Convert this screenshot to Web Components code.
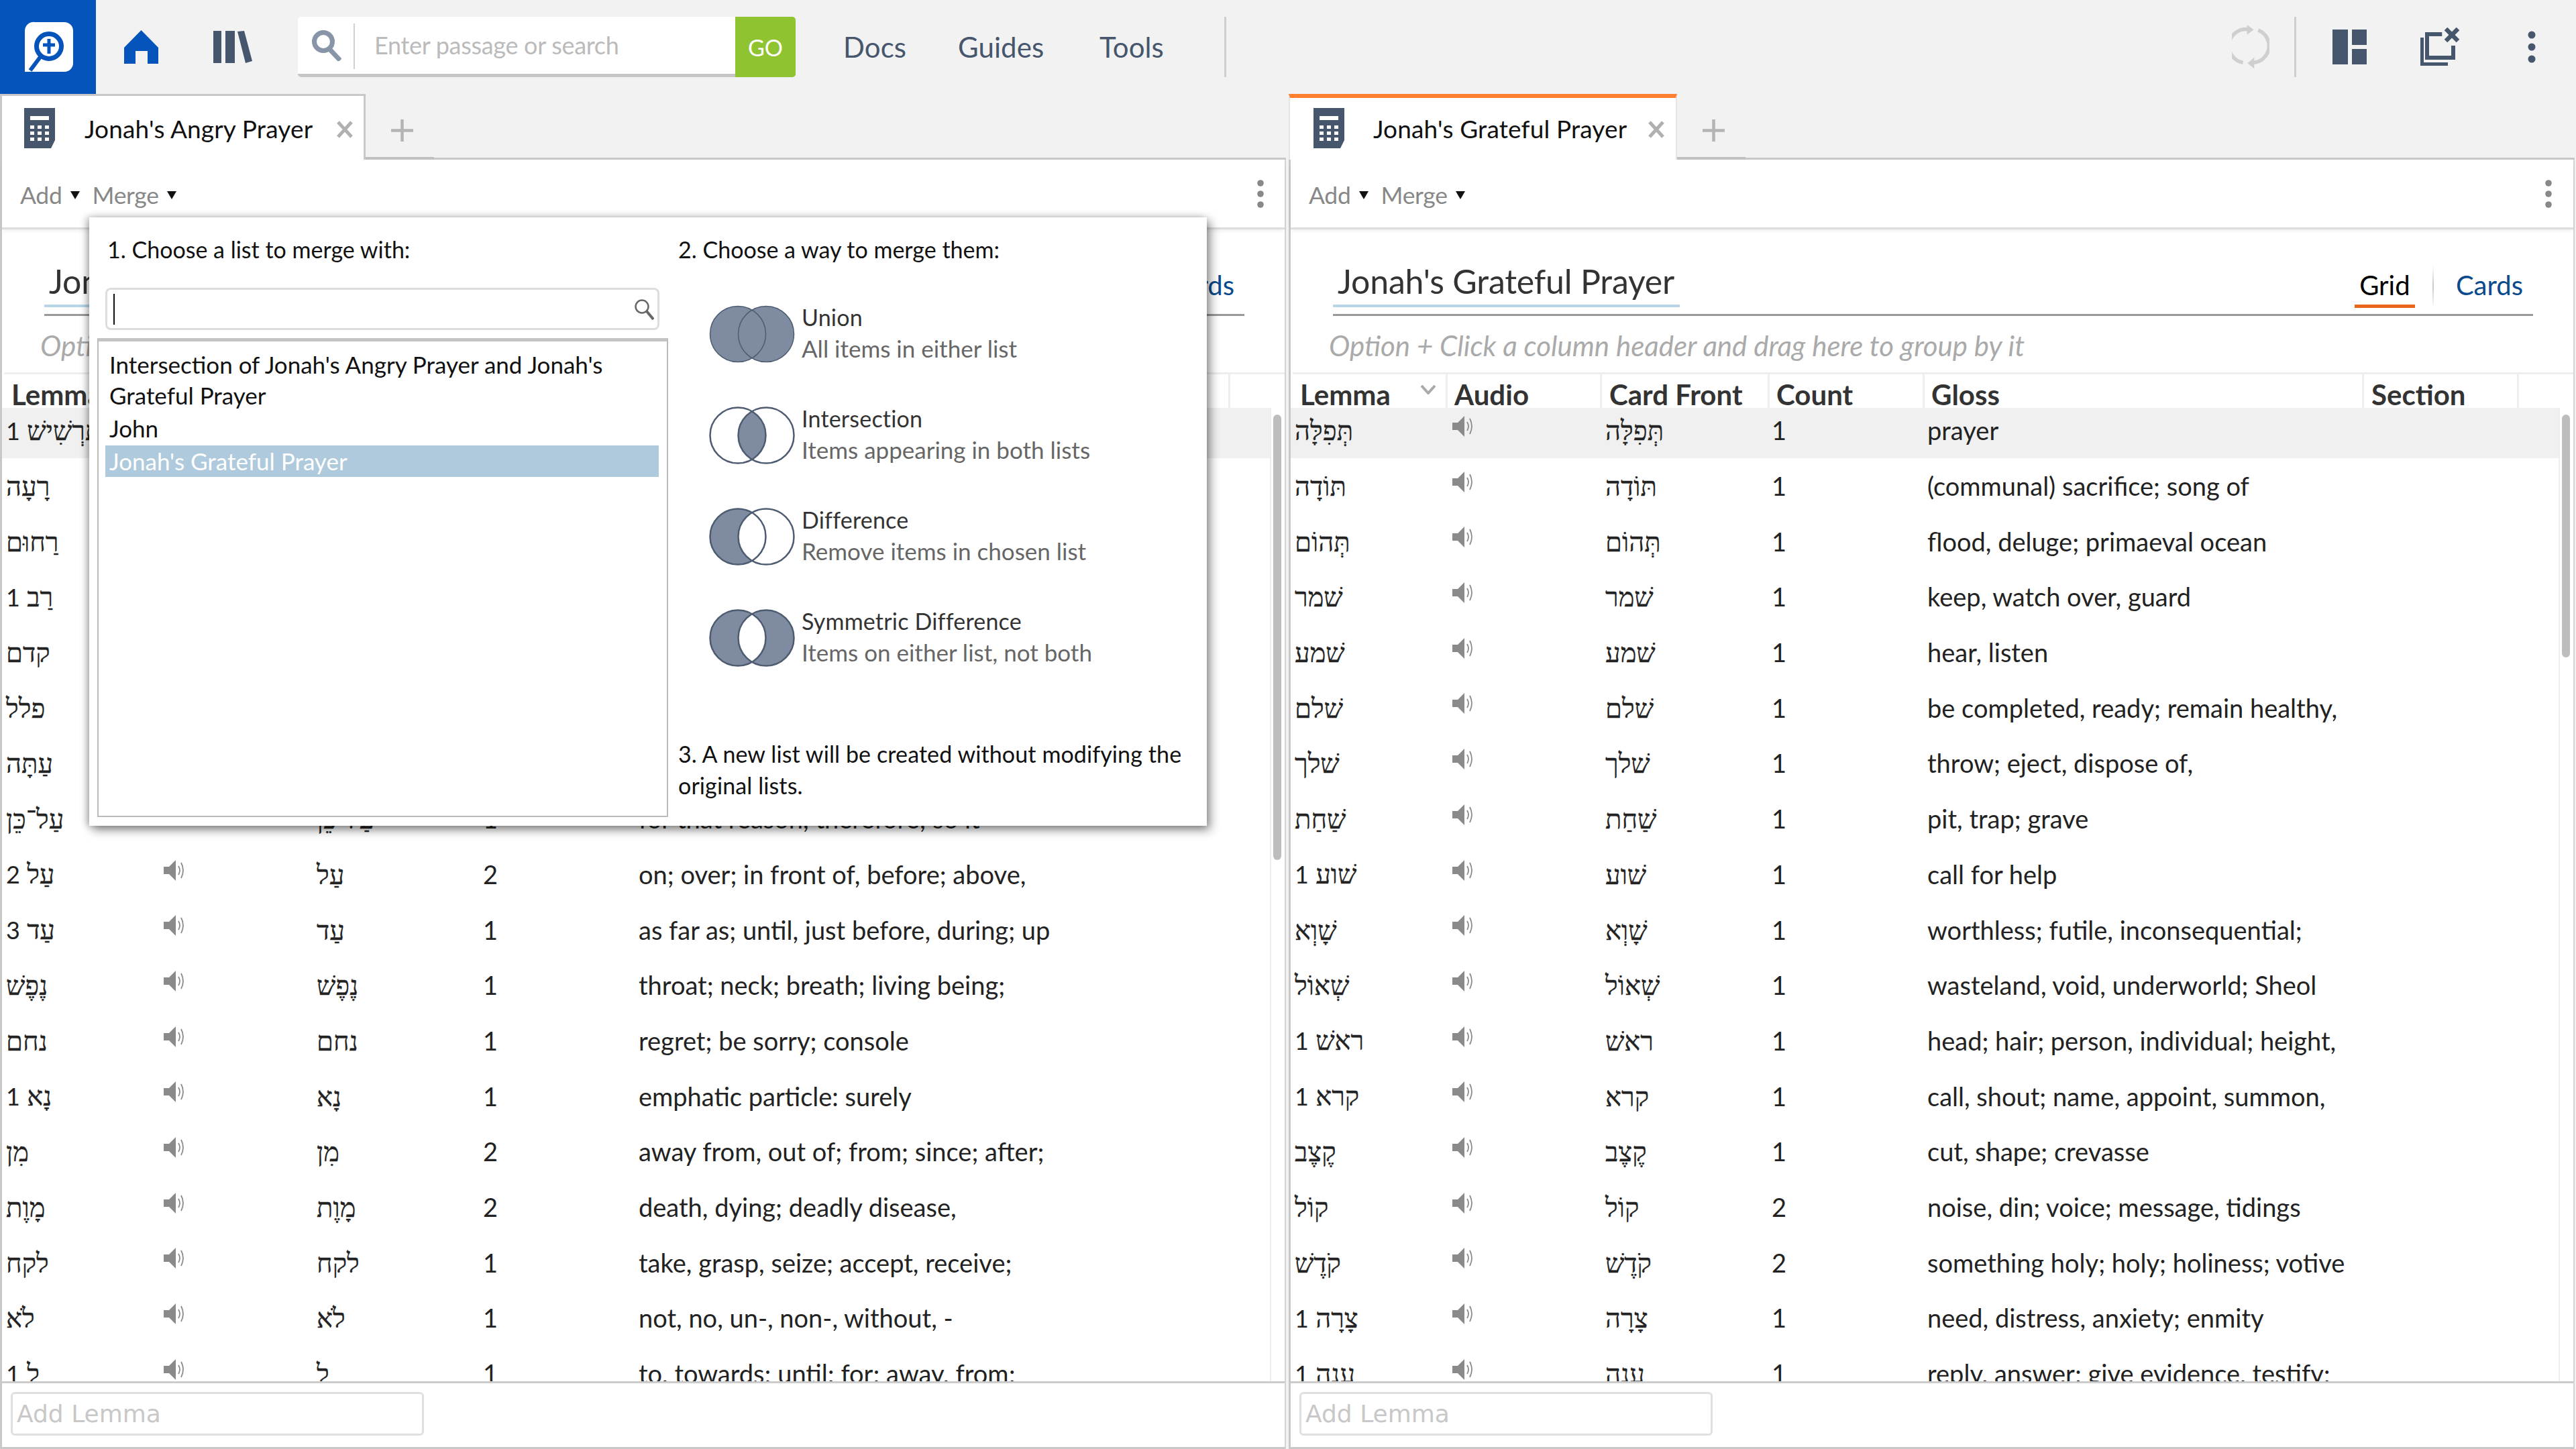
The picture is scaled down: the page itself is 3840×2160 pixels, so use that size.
<!DOCTYPE html>
<html lang="en"><head><meta charset="utf-8"><title>Jonah lists</title>
<style>
html,body{margin:0;height:100%;background:#f2f2f2;overflow:hidden}
body{display:flex;flex-direction:column;height:2160px;font-family:Lato,"Liberation Serif",serif;color:#222}
</style></head><body>
<top-bar></top-bar>
<pane-row>
  <list-pane name="Jonah's Angry Prayer" set="angry" thumb="664">
    <merge-popup></merge-popup>
  </list-pane>
  <list-pane name="Jonah's Grateful Prayer" set="grateful" thumb="362" accent></list-pane>
</pane-row>
<script>
const SANS='Lato,"Liberation Serif",serif';
class Base extends HTMLElement{
  render(html){const r=this.shadowRoot||this.attachShadow({mode:'open'});r.innerHTML=html;return r;}
}
class TopBar extends Base{connectedCallback(){this.render(`<style>
:host{display:flex;height:140px;flex:none;align-items:center;background:#f2f2f2;font-family:${SANS}}
.logo{width:143px;height:140px;background:#0454bc;display:block;flex:none}
svg{display:block;flex:none}
.home{margin-left:42px}.books{margin-left:82px}
.search{margin-left:68px;width:742px;height:90px;box-sizing:border-box;display:flex;background:#fff;border-bottom:5px solid #c6c6c6;border-radius:5px;flex:none}
.mag{width:85px;height:68px;margin-top:10px;border-right:2px solid #d0d0d0;box-sizing:border-box;padding:10px 0 0 19px}
.ph{flex:1;padding-left:29px;font-size:36px;line-height:85px;color:#bbb;letter-spacing:-.3px}
.go{width:90px;height:90px;background:#8fc32f;color:#fff;font-size:34px;line-height:92px;text-align:center;border-radius:0 5px 5px 0;flex:none}
.nav{font-size:42px;color:#46566d;flex:none;letter-spacing:.1px}
.sep{width:3px;height:90px;background:#cfcfcf;flex:none}
</style>
<svg class="logo" viewBox="0 0 143 140">
<path fill="#fff" d="M52 33H96a13 13 0 0 1 13 13V94a13 13 0 0 1-13 13H43l-6 0V46a13 13 0 0 1 15-13Z"/>
<circle cx="73" cy="69" r="18.5" fill="#fff" stroke="#0454bc" stroke-width="7"/>
<path d="M60 85L45 105" stroke="#0454bc" stroke-width="6" fill="none"/>
<path d="M73 58V80M64 67H82" stroke="#0454bc" stroke-width="5" fill="none"/>
</svg>
<svg class="home" width="51" height="50" viewBox="0 0 51 50"><path fill="#0454bc" d="M25.500 0L51 26V50H35V31H17V50H0V26Z"/></svg>
<svg class="books" width="58" height="48" viewBox="0 0 58 48"><path fill="#46566d" d="M0 0H12V48H0ZM18 0H32V48H18ZM36 1L46 0L58 45L48 48Z"/></svg>
<div class="search"><div class="mag"><svg width="46" height="46" viewBox="0 0 46 46"><circle cx="19" cy="17" r="13.500" fill="none" stroke="#8894a8" stroke-width="7"/><path d="M28 28L44 45" stroke="#8894a8" stroke-width="7"/></svg></div>
<div class="ph">Enter passage or search</div><div class="go">GO</div></div>
<div class="nav" style="margin-left:71px;width:171px">Docs</div>
<div class="nav" style="width:211px">Guides</div>
<div class="nav" style="width:186px">Tools</div>
<div class="sep"></div>
<svg style="margin-left:auto" width="56" height="66" viewBox="0 0 56 66" fill="none" stroke="#cfcfcf" stroke-width="5.500"><path d="M16.600 56.300A25 25 0 0 1 25 7"/><path d="M39.300 8A25 25 0 0 1 31.600 56.300"/><path fill="#cfcfcf" stroke="none" d="M22.700 0L32.600 7.300L22.600 14.700ZM33.300 48.700L23.300 57.300L33.300 65.300Z"/></svg>
<div class="sep" style="margin-left:37px"></div>
<svg style="margin-left:54px" width="51" height="52" viewBox="0 0 51 52"><path fill="#46566d" d="M0 0H23V52H0ZM29 0H51V23H29ZM29 29H51V52H29Z"/></svg>
<svg style="margin-left:80px" width="60" height="58" viewBox="0 0 60 58" fill="none" stroke="#46566d"><path stroke-width="6" d="M32.300 10H10V45H49V27"/><path stroke-width="5" d="M2.500 15V54.500H41"/><path stroke-width="6.500" d="M38 2L56 20M56 2L38 20"/></svg>
<svg style="margin:0 60px 0 100px" width="12" height="48" viewBox="0 0 12 48" fill="#46566d"><circle cx="6" cy="6" r="5.500"/><circle cx="6" cy="24" r="5.500"/><circle cx="6" cy="42" r="5.500"/></svg>`);}}
class PaneRow extends Base{connectedCallback(){this.render(`<style>:host{display:flex;flex:1;min-height:0;padding-right:2px;gap:4px}::slotted(*){flex:1 1 0;min-width:0}</style><slot></slot>`);}}
const DATA={
angry:[
["תַּרְשִׁישׁ 1"],["רָעָה"],["רַחוּם"],["רַב 1"],["קדם"],["פלל"],["עַתָּה"],
["עַל־כֵּן","עַל־כֵּן","1","for that reason, therefore; so it"],
["עַל 2","עַל","2","on; over; in front of, before; above,"],
["עַד 3","עַד","1","as far as; until, just before, during; up"],
["נֶפֶשׁ","נֶפֶשׁ","1","throat; neck; breath; living being;"],
["נחם","נחם","1","regret; be sorry; console"],
["נָא 1","נָא","1","emphatic particle: surely"],
["מִן","מִן","2","away from, out of; from; since; after;"],
["מָוֶת","מָוֶת","2","death, dying; deadly disease,"],
["לקח","לקח","1","take, grasp, seize; accept, receive;"],
["לֹא","לֹא","1","not, no, un-, non-, without, -"],
["לְ 1","לְ","1","to, towards; until; for; away, from;"]],
grateful:[
["תְּפִלָּה","תְּפִלָּה","1","prayer"],
["תּוֹדָה","תּוֹדָה","1","(communal) sacrifice; song of"],
["תְּהוֹם","תְּהוֹם","1","flood, deluge; primaeval ocean"],
["שׁמר","שׁמר","1","keep, watch over, guard"],
["שׁמע","שׁמע","1","hear, listen"],
["שׁלם","שׁלם","1","be completed, ready; remain healthy,"],
["שׁלך","שׁלך","1","throw; eject, dispose of,"],
["שַׁחַת","שַׁחַת","1","pit, trap; grave"],
["שׁוע 1","שׁוע","1","call for help"],
["שָׁוְא","שָׁוְא","1","worthless; futile, inconsequential;"],
["שְׁאוֹל","שְׁאוֹל","1","wasteland, void, underworld; Sheol"],
["ראשׁ 1","ראשׁ","1","head; hair; person, individual; height,"],
["קרא 1","קרא","1","call, shout; name, appoint, summon,"],
["קֶצֶב","קֶצֶב","1","cut, shape; crevasse"],
["קוֹל","קוֹל","2","noise, din; voice; message, tidings"],
["קֹדֶשׁ","קֹדֶשׁ","2","something holy; holy; holiness; votive"],
["צָרָה 1","צָרָה","1","need, distress, anxiety; enmity"],
["ענה 1","ענה","1","reply, answer; give evidence, testify;"]]};
const SPK=`<svg width="32" height="31" viewBox="0 0 32 31"><path fill="#8a8a8a" d="M0 10H8L18 0V31L8 21H0Z"/><path fill="none" stroke="#8a8a8a" stroke-width="1.800" d="M22 9Q26 15.500 22 22M26 4Q32 15.500 26 27"/></svg>`;
const lem=s=>s.replace(/ (\d)$/,' <span class="n">$1</span>');
class ListPane extends Base{connectedCallback(){
 const name=this.getAttribute('name'),accent=this.hasAttribute('accent'),rows=DATA[this.getAttribute('set')];
 const row=(r,i)=>`<div class="row${i==0?' hi':''}"><div class="c lem">${lem(r[0])}</div><div class="c aud">${r[1]===undefined&&i<7?'':SPK}</div><div class="c card">${r[1]||''}</div><div class="c cnt">${r[2]||''}</div><div class="c gl">${r[3]||''}</div></div>`;
 this.render(`<style>
:host{display:flex;flex-direction:column;position:relative;min-height:0;font-family:${SANS};color:#222}
.strip{height:98px;box-sizing:border-box;display:flex;border-bottom:3px solid #c8c8c8;flex:none}
.tab{width:${accent?579:545}px;height:98px;box-sizing:border-box;background:#fff;display:flex;align-items:center;
 border-top:${accent?'6px solid #ff7f30':'3px solid #c8c8c8'};border-left:${accent?'2px solid #e4e4e4':'3px solid #c8c8c8'};border-right:${accent?'2px solid #e4e4e4':'3px solid #c8c8c8'};padding-left:${accent?35:33}px;padding-top:${accent?0:3}px}
.tt{font-size:37px;color:#111;margin-left:${accent?43:44}px;flex:none;letter-spacing:.15px;line-height:60px}
.x{margin-left:auto;margin-right:${accent?16:15}px;margin-top:2px}
.add{width:102px;height:98px;box-sizing:border-box;border-bottom:4px solid #c0c0c0;padding:38px 0 0 38px}
.body{flex:1;min-height:0;display:flex;flex-direction:column;background:#fff;border-left:3px solid #c8c8c8;border-right:2px solid #d4d4d4;border-bottom:3px solid #c8c8c8}
.tools{height:104px;box-sizing:border-box;flex:none;display:flex;align-items:center;border-bottom:3px solid #ddd;box-shadow:0 4px 6px -2px rgba(0,0,0,.08);position:relative;padding:4px 0 0 27px;font-size:35.500px;letter-spacing:-.3px;color:#888}
.caret{width:0;height:0;border:7.500px solid transparent;border-top:12px solid #111;border-bottom:0;margin:0 19px 0 12px}
.vd{margin-left:auto;margin-right:${accent?32:31}px;display:block;margin-top:-4px}
.head{height:129px;box-sizing:border-box;flex:none;margin:0 60px 0 63px;border-bottom:3px solid #999;display:flex;align-items:flex-end}
.title{font-size:50px;color:#333;box-sizing:border-box;min-width:517px;padding:0 0 6px 7px;border-bottom:4px solid #b9d5e8;margin-bottom:10px;line-height:58px;letter-spacing:-.2px}
.views{margin-left:auto;display:flex;align-items:flex-end;font-size:40px;margin-bottom:9px;margin-right:15px}
.grid{color:#000;width:90px;box-sizing:border-box;text-align:center;padding:0 0 1px;border-bottom:5px solid #e8651a;line-height:56px}
.vs{width:2px;height:64px;margin:0 33px 0 26px;background:linear-gradient(#fff,#c8c8c0,#fff)}
.cards{color:#0b4a8c;line-height:56px;padding-bottom:6px}
.opt{height:84px;box-sizing:border-box;flex:none;padding-left:57px;font-size:42px;font-style:italic;color:#aaa;line-height:88px}
.hdr{height:53px;box-sizing:border-box;flex:none;border-top:3px solid #eee;margin-left:3px;display:flex;position:relative;font-weight:700;font-size:42px;color:#333;overflow:hidden}
.hdr div{box-sizing:border-box;border-right:3px solid #eee;padding-left:11px;line-height:61px;flex:none}
.chev{position:absolute;left:190px;top:16px}
.main{flex:1;min-height:0;display:flex}
.rows{flex:1;min-width:0;overflow:hidden}
.track{width:22px;flex:none;border-left:2px solid #eee;box-sizing:border-box;padding:10px 0 0 3px}
.thumb{width:12px;background:#bdbdbd;border-radius:6px}
.row{height:82.700px;display:flex;font-size:38px;align-items:center}
.row:first-child{margin-top:-8px}
.hi{background:#f0f0f0}
.c{flex:none;box-sizing:border-box;white-space:nowrap;overflow:hidden;padding-left:7px;line-height:82px;color:#222}
.lem{width:234px;padding-left:6px;font-size:40px;-webkit-text-stroke:.3px #222}
.n{font-size:36px;-webkit-text-stroke:0}
.aud{width:230px;padding-left:7px;line-height:0;align-self:flex-start;padding-top:20px}
.card{width:250px;padding-left:5px;font-size:40px;-webkit-text-stroke:.3px #222}
.cnt{width:231px;padding-left:3px}
.gl{width:886px;padding-left:4px}
.foot{height:98px;box-sizing:border-box;flex:none;border-top:3px solid #ccc;padding:13px 0 0 13px;background:#fff}
.inp{width:616px;height:65px;box-sizing:border-box;border:3px solid #e0e0e0;border-radius:6px;font:36px/59px "DejaVu Sans",sans-serif;color:#c8c8c8;padding-left:6px}
</style>
<div class="strip"><div class="tab">
<svg width="46" height="60" viewBox="0 0 46 60" style="flex:none;margin-top:-2px"><path fill="#46566d" d="M0 0H46V48L40 60H0Z"/><path fill="#fff" d="M9 12H37V18H9Z"/><path fill="#fff" d="M9 26h6v5H9zM20 26h6v5h-6zM31 26h6v5h-6zM9 35h6v5H9zM20 35h6v5h-6zM31 35h6v5h-6zM9 44h6v5H9zM20 44h6v5h-6zM31 44h6v5h-6z"/></svg>
<div class="tt">${name}</div>
<svg class="x" width="26" height="26" viewBox="0 0 26 26"><path d="M3 2L23 24M23 2L3 24" stroke="#b0b0b0" stroke-width="5"/></svg></div>
<div class="add"><svg width="33" height="33" viewBox="0 0 33 33"><path d="M16.500 0V33M0 16.500H33" stroke="#b4b4b4" stroke-width="4.500"/></svg></div></div>
<div class="body">
<div class="tools"><span>Add</span><i class="caret"></i><span>Merge</span><i class="caret"></i>
<svg class="vd" width="10" height="42" viewBox="0 0 10 42" fill="#888"><circle cx="5" cy="5" r="4.800"/><circle cx="5" cy="21" r="4.800"/><circle cx="5" cy="37" r="4.800"/></svg></div>
<div class="head"><div class="title">${name}</div><div class="views"><div class="grid">Grid</div><div class="vs"></div><div class="cards">Cards</div></div></div>
<div class="opt">Option + Click a column header and drag here to group by it</div>
<div class="hdr"><div style="width:231px">Lemma</div><div style="width:230px;padding-left:10px">Audio</div><div style="width:250px">Card Front</div><div style="width:231px;padding-left:10px">Count</div><div style="width:655px;padding-left:10px">Gloss</div><div style="width:231px">Section</div>
<svg class="chev" width="24" height="14" viewBox="0 0 24 14"><path d="M2 1L12 12L22 1" fill="none" stroke="#aaa" stroke-width="4"/></svg></div>
<div class="main"><div class="rows">${rows.map(row).join('')}</div><div class="track"><div class="thumb" style="height:${this.getAttribute('thumb')}px"></div></div></div>
<div class="foot"><div class="inp">Add Lemma</div></div>
</div><slot></slot>`);}}
class VennIcon extends Base{connectedCallback(){
 const m=this.getAttribute('mode'),D='#7f8ba0',S='#4e5c72';
 const f={union:[D,D,D],intersection:['#fff','#fff',D],difference:[D,'#fff','#fff'],symmetric:[D,D,'#fff']}[m];
 const lens='M64 7.200A41.500 41.500 0 0 1 64 78.800A41.500 41.500 0 0 1 64 7.200Z';
 this.render(`<style>:host{display:block;flex:none;width:128px;height:86px}svg{display:block}</style>
<svg width="128" height="86" viewBox="0 0 128 86"><circle cx="43" cy="43" r="41.500" fill="${f[0]}"/><circle cx="85" cy="43" r="41.500" fill="${f[1]}"/><path d="${lens}" fill="${f[2]}"/>
<circle cx="43" cy="43" r="41.500" fill="none" stroke="${S}" stroke-width="${m=='union'?1.500:2.500}"/><circle cx="85" cy="43" r="41.500" fill="none" stroke="${S}" stroke-width="${m=='union'?1.500:2.500}"/></svg>`);}}
class MergeOption extends Base{connectedCallback(){this.render(`<style>:host{display:flex;height:151px;gap:10px}
.t{line-height:47px;margin-top:-6px}.a{color:#333;font-size:34px;letter-spacing:.2px}.b{color:#666;font-size:35px}</style>
<venn-icon mode="${this.getAttribute('mode')}"></venn-icon><div class="t"><div class="a">${this.getAttribute('label')}</div><div class="b">${this.getAttribute('desc')}</div></div>`);}}
class MergePopup extends Base{connectedCallback(){this.render(`<style>
:host{position:absolute;left:133px;top:184px;width:1666px;height:907px;background:#fff;box-shadow:5px 6px 14px rgba(0,0,0,.45),-4px 0 10px rgba(0,0,0,.25);display:flex;font-family:${SANS};color:#111;font-size:34px;z-index:5}
.l{width:878px;flex:none;position:relative;box-sizing:border-box;padding:24px 0 0 27px}
.r{flex:1;padding:24px 0 0 0}
.h{line-height:48px;height:48px}
.in{width:826px;height:63px;box-sizing:border-box;margin:33px 0 0 -3px;border:3px solid #ddd;border-radius:8px;display:flex;align-items:center;padding-left:9px}
.caretline{width:2px;height:46px;background:#111}
.in svg{margin-left:auto;margin-right:5px}
.lst{margin:12px 0 0 -15px;width:851px;height:714px;box-sizing:border-box;border:2px solid #bbb;border-top:5px solid #c4c4c4;padding:11px 12px 0 10px;line-height:46px;font-size:35px}
.it{padding-left:6px;color:#111}.it+.it{margin-top:3px}
.sel{background:#aecadc;color:#fff;margin-top:3px!important;line-height:47px}
.opts{margin:59px 0 0 46px}
.note{margin-top:41px;line-height:47px;letter-spacing:.1px;padding-right:20px}
</style>
<div class="l"><div class="h">1. Choose a list to merge with:</div>
<div class="in"><div class="caretline"></div><svg width="30" height="32" viewBox="0 0 30 32" fill="none" stroke="#666"><circle cx="12" cy="12" r="9.500" stroke-width="2.500"/><path d="M19 19L29 31" stroke-width="4"/></svg></div>
<div class="lst"><div class="it">Intersection of Jonah's Angry Prayer and Jonah's Grateful Prayer</div><div class="it">John</div><div class="it sel">Jonah's Grateful Prayer</div></div></div>
<div class="r"><div class="h">2. Choose a way to merge them:</div>
<div class="opts"><merge-option mode="union" label="Union" desc="All items in either list"></merge-option>
<merge-option mode="intersection" label="Intersection" desc="Items appearing in both lists"></merge-option>
<merge-option mode="difference" label="Difference" desc="Remove items in chosen list"></merge-option>
<merge-option mode="symmetric" label="Symmetric Difference" desc="Items on either list, not both"></merge-option></div>
<div class="note">3. A new list will be created without modifying the original lists.</div></div>`);}}
customElements.define('venn-icon',VennIcon);
customElements.define('merge-option',MergeOption);
customElements.define('merge-popup',MergePopup);
customElements.define('top-bar',TopBar);
customElements.define('pane-row',PaneRow);
customElements.define('list-pane',ListPane);
</script>
</body></html>
